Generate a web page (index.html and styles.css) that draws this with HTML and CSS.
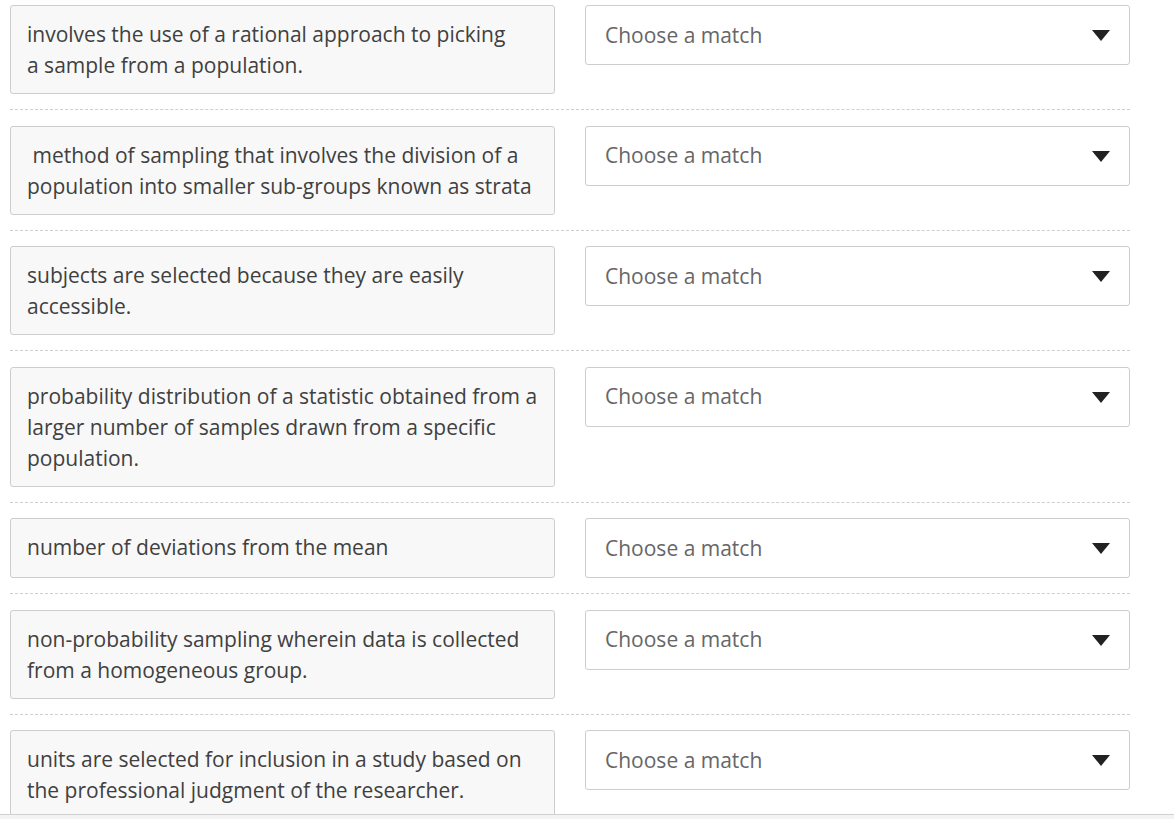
FILE: index.html
```html
<!DOCTYPE html>
<html>
<head>
<meta charset="utf-8">
<link rel="stylesheet" href="styles.css">
</head>
<body>
<div class="list">
  <div class="row">
    <div class="prompt">involves the use of a rational approach to picking<br>a sample from a population.</div>
    <div class="select"><span>Choose a match</span><span class="arrow"></span></div>
  </div>
  <div class="row">
    <div class="prompt">&nbsp;method of sampling that involves the division of a population into smaller sub-groups known as strata</div>
    <div class="select"><span>Choose a match</span><span class="arrow"></span></div>
  </div>
  <div class="row">
    <div class="prompt">subjects are selected because they are easily accessible.</div>
    <div class="select"><span>Choose a match</span><span class="arrow"></span></div>
  </div>
  <div class="row">
    <div class="prompt">probability distribution of a statistic obtained from a larger number of samples drawn from a specific population.</div>
    <div class="select"><span>Choose a match</span><span class="arrow"></span></div>
  </div>
  <div class="row">
    <div class="prompt">number of deviations from the mean</div>
    <div class="select"><span>Choose a match</span><span class="arrow"></span></div>
  </div>
  <div class="row">
    <div class="prompt">non-probability sampling wherein data is collected from a homogeneous group.</div>
    <div class="select"><span>Choose a match</span><span class="arrow"></span></div>
  </div>
  <div class="row">
    <div class="prompt">units are selected for inclusion in a study based on the professional judgment of the researcher.</div>
    <div class="select"><span>Choose a match</span><span class="arrow"></span></div>
  </div>
</div>
<div class="bottombar"></div>
</body>
</html>
```
FILE: styles.css
```css
html, body {
  margin: 0;
  padding: 0;
  background: #fff;
  overflow: hidden;
}
body {
  font-family: "Open Sans", "Liberation Sans", sans-serif;
  font-size: 21px;
  line-height: 31px;
  color: #404040;
}
.list {
  width: 1120px;
  margin-left: 10px;
  padding-top: 5px;
}
.row {
  display: grid;
  grid-template-columns: 545px 545px;
  column-gap: 30px;
  align-items: start;
  padding: 15.25px 0;
  border-bottom: 1px dashed #cfcfcf;
}
.row:first-child {
  padding-top: 0;
}
.prompt {
  box-sizing: border-box;
  min-height: 60px;
  background: #f8f8f8;
  border: 1px solid #cdcdcd;
  border-radius: 3px;
  padding: 13px 16px 12px 16px;
}
.select {
  display: flex;
  align-items: center;
  justify-content: space-between;
  box-sizing: border-box;
  height: 60px;
  border: 1px solid #cdcdcd;
  border-radius: 3px;
  background: #fff;
  padding: 0 19px 0 19px;
  color: #666;
}
.arrow {
  width: 0;
  height: 0;
  border-left: 9px solid transparent;
  border-right: 9px solid transparent;
  border-top: 11px solid #222;
  margin-top: 1px;
}
.bottombar {
  position: fixed;
  left: 0;
  right: 0;
  top: 814px;
  bottom: 0;
  background: #f3f3f3;
  border-top: 1px solid #d0d0d0;
}
```
